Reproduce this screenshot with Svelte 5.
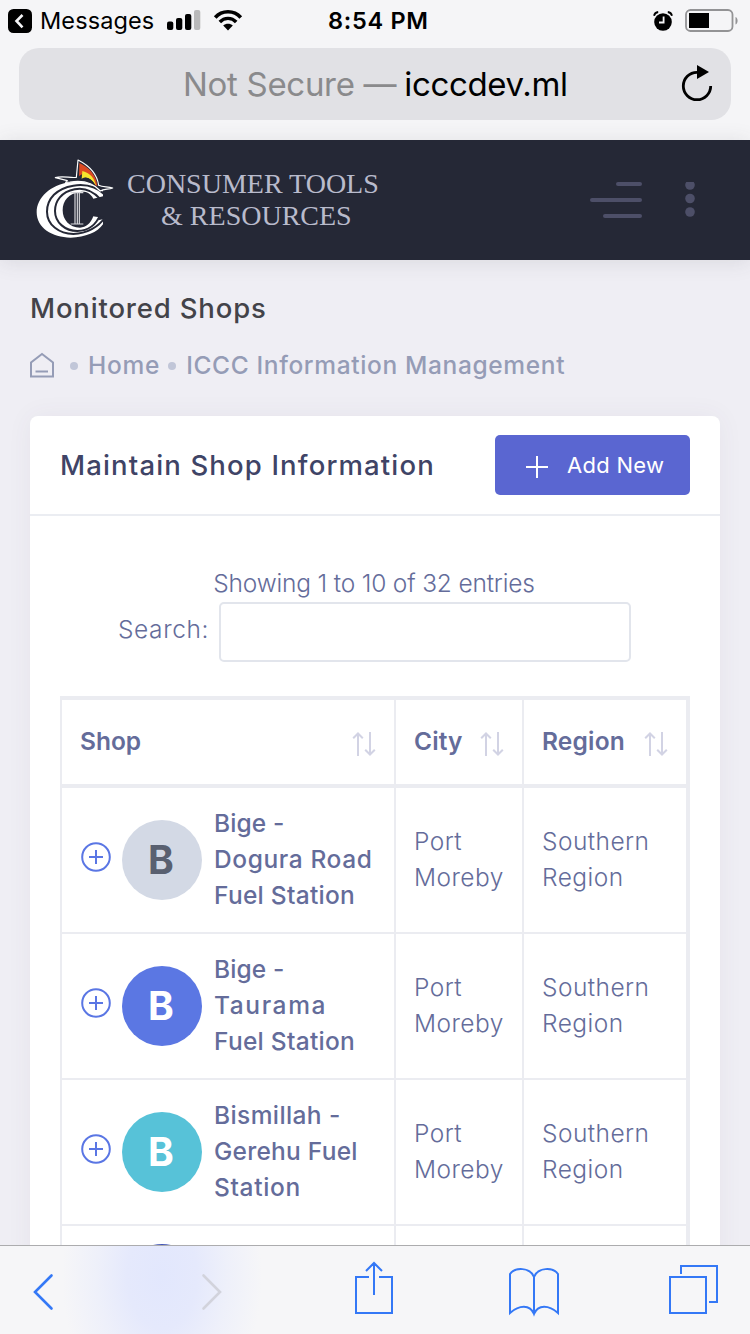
<script>
  const columns = ['Shop', 'City', 'Region'];
  const city = ['Port', 'Moreby'];
  const region = ['Southern', 'Region'];
  const shops = [
    { initial: 'B', lines: [['Bige -', 0.13], ['Dogura Road', 0.6], ['Fuel Station', 0.28]], tone: 'grey', city, region },
    { initial: 'B', lines: [['Bige -', 0.13], ['Taurama', 1.6], ['Fuel Station', 0.28]], tone: 'blue', city, region },
    { initial: 'B', lines: [['Bismillah -', 0.4], ['Gerehu Fuel', 0.25], ['Station', 0.65]], tone: 'teal', city, region },
    { initial: '', lines: [], tone: 'indigo', city: [], region: [] }
  ];
</script>

<div class="screen">
  <div class="chrome">
    <div class="status">
      <div class="side">
        <svg width="24" height="24" viewBox="0 0 24 24"><rect width="24" height="24" rx="5.5" /><path d="M14.5 6 8.5 12l6 6.3" fill="none" stroke="#f5f5f7" stroke-width="2.6" /></svg>
        <span class="messages">Messages</span>
        <svg class="signal" width="34" height="21" viewBox="0 0 34 21">
          <rect x="0" y="11.5" width="6.3" height="8.5" rx="2" /><rect x="9" y="8" width="6.3" height="12" rx="2" /><rect x="18" y="4" width="6.3" height="16" rx="2" /><rect x="27" y="0" width="6.3" height="20" rx="2" fill="#b9b9ba" />
        </svg>
        <svg class="wifi" width="28" height="21" viewBox="0 0 28 21" fill="none" stroke="#000">
          <path d="M1.2 7.5C8-.2 20-.2 26.8 7.5" stroke-width="3.6" /><path d="M5.800 12c4.500-4.900 11.900-4.900 16.400 0" stroke-width="3.400" /><path d="M14 20.500 9.200 15.600c2.500-2.400 7.100-2.400 9.600 0Z" fill="#000" stroke="none" />
        </svg>
      </div>
      <span class="time">8:54 PM</span>
      <div class="side end">
        <svg width="20" height="20" viewBox="0 0 20 20"><circle cx="10" cy="11" r="8.800" /><path d="M10.600 5.500v6H6" fill="none" stroke="#f5f5f7" stroke-width="1.800" /><path d="M1 4.800C1.500 2.500 3 1.200 5.200 1M19 4.800C18.500 2.500 17 1.200 14.800 1" fill="none" stroke="#000" stroke-width="1.800" /></svg>
        <svg width="54" height="24" viewBox="0 0 54 24"><rect x="1" y="1" width="46.500" height="21" rx="4.500" fill="none" stroke="#939395" stroke-width="1.800" /><rect x="4" y="4" width="20" height="15" /><path d="M50.500 8c2.800 1.200 2.800 6.400 0 7.500Z" fill="#939395" /></svg>
      </div>
    </div>
    <div class="url">
      <span class="insecure">Not Secure —</span><span class="domain">icccdev.ml</span>
      <svg class="reload" width="32" height="38" viewBox="0 0 32 38"><path d="M17.500 7.300H16a13.700 13.700 0 1 0 13.700 13.700" fill="none" stroke="#000" stroke-width="2.800" /><path d="M16 0v14l12-7Z" /></svg>
    </div>
  </div>

  <header>
    <div class="brand">
      <svg width="90" height="90" viewBox="0 0 270 270">
        <path fill="#fff" d="M219 98C196 80 158 76 118 82C62 90 20 128 20 172C20 218 66 248 122 248C166 247 203 232 219 208V188L190 184C182 206 168 217 150 218C118 218 98 194 98 166C98 137 117 114 150 111C168 109 180 114 190 131L219 124Z" />
        <path fill="#252836" d="M190 183L222 186V192L204 196L210 182Z" />
        <g fill="none" stroke="#252836" stroke-width="6">
          <path d="M226 120C198 93 163 87 130 92C80 100 51 131 51 170C51 210 88 237 130 237C170 236 206 216 226 186" />
          <path d="M212 133C184 103 158 98 134 103C94 111 75 138 75 168C75 203 106 228 142 228C174 227 198 210 210 180" />
        </g>
        <path d="M122 113h38M122 207h38M135 113v94M142 113v94M148 113v94" fill="none" stroke="#d9d9dd" stroke-width="3.500" />
        <path d="M76 68C98 61 121 70 139 67L144 15C170 28 200 48 206 91C220 98 234 93 248 99C234 104 222 101 211 108C190 84 157 75 120 81L107 82L112 77Z" fill="#252836" stroke="#fff" stroke-width="3.500" stroke-linejoin="round" />
        <path d="M148 24C176 36 198 58 202 93L196 91C186 62 164 48 147 64Z" fill="#dc4a22" />
        <path d="M157 48C182 54 194 72 198 91C184 72 171 62 155 72Z" fill="#f5e52d" />
        <path d="M155 72C168 62 182 70 193 86L176 79L153 76Z" fill="#252836" />
      </svg>
      <div class="wordmark"><span>CONSUMER TOOLS</span><span>&amp; RESOURCES</span></div>
    </div>
    <div class="tools">
      <svg width="52" height="36" viewBox="0 0 52 36" fill="#4d4f68"><rect x="26" width="26" height="4" rx="2" /><rect y="16" width="52" height="4" rx="2" /><rect x="13" y="32" width="39" height="4" rx="2" /></svg>
      <svg width="10" height="36" viewBox="0 0 10 36" fill="#4d4f68"><circle cx="5" cy="3" r="4.800" /><circle cx="5" cy="16.500" r="4.800" /><circle cx="5" cy="30" r="4.800" /></svg>
    </div>
  </header>

  <main>
    <h1>Monitored Shops</h1>
    <nav>
      <svg width="24" height="26" viewBox="0 0 24 26" fill="none" stroke="#959cb6" stroke-width="2"><path d="M1 24.500V10.500L12 2 23 10.500v14Z" /><path d="M5.500 19.500h12.500" /></svg>
      <i></i><span class="home">Home</span><i></i><span class="crumb">ICCC Information Management</span>
    </nav>

    <section>
      <div class="card-head">
        <h2>Maintain Shop Information</h2>
        <button><svg width="22" height="22" viewBox="0 0 22 22" stroke="#fff" stroke-width="2"><path d="M11 0v22M0 11h22" /></svg><span>Add New</span></button>
      </div>
      <p class="info">Showing 1 to 10 of 32 entries</p>
      <label><span>Search:</span><input type="text" /></label>

      <div class="table">
        <div class="row head">
          {#each columns as column}
            <div class="cell {column.toLowerCase()}">
              <span>{column}</span>
              <svg width="24" height="24" viewBox="0 0 24 24" fill="none" stroke="#d2d3e4" stroke-width="2"><path d="M6 24V1.500M1.200 6.300 6 1.500l4.800 4.800M18 0v22.500M13.200 17.700 18 22.500l4.800-4.800" /></svg>
            </div>
          {/each}
        </div>
        {#each shops as shop}
          <div class="row">
            <div class="cell name">
              <svg width="30" height="30" viewBox="0 0 30 30" fill="none" stroke="#5a76e4" stroke-width="2"><circle cx="15" cy="15" r="13.800" /><path d="M15 8v14M8 15h14" /></svg>
              <div class="avatar {shop.tone}">{shop.initial}</div>
              <div class="lines">
                {#each shop.lines as [text, spacing]}<span style="letter-spacing: {spacing}px">{text}</span>{/each}
              </div>
            </div>
            <div class="cell"><div class="lines light">{#each shop.city as word}<span>{word}</span>{/each}</div></div>
            <div class="cell"><div class="lines light">{#each shop.region as word}<span>{word}</span>{/each}</div></div>
          </div>
        {/each}
      </div>
    </section>
  </main>

  <footer>
    <svg class="prev" width="20" height="36" viewBox="0 0 20 36"><path d="M18.500 1.500 2 18l16.500 16.500" /></svg>
    <svg class="next" width="20" height="36" viewBox="0 0 20 36"><path d="M1.500 1.500 18 18 1.500 34.500" /></svg>
    <svg class="share" width="38" height="53" viewBox="0 0 38 53"><path d="M14 16H1v36h36V16H24M19 34V2M11 10l8-8 8 8" /></svg>
    <svg class="book" width="50" height="48" viewBox="0 0 50 48"><path d="M25 46V9C21-1 6-1 1 6V45C10 37 21 36 25 46C29 36 40 37 49 45V6C44-1 29-1 25 9" /></svg>
    <svg class="tabs" width="50" height="50" viewBox="0 0 50 50"><path d="M1 12h36v36H1ZM12 9V1h36v36h-8" /></svg>
  </footer>
</div>

<style>
  .screen { width: 750px; height: 1334px; display: flex; flex-direction: column; overflow: hidden; background: #efeef4; font-family: Inter, sans-serif; }
  .screen * { box-sizing: border-box; }
  svg { display: block; flex: none; overflow: visible; }
  h1, h2, p { margin: 0; }
  span { white-space: nowrap; }

  .chrome { flex: none; height: 140px; background: #f5f5f7; }
  .status { height: 40px; display: grid; grid-template-columns: 328px 1fr 328px; align-items: center; padding: 1px 0 0; font-size: 23.5px; line-height: 38px; color: #000; }
  .side { display: flex; align-items: center; padding-left: 8px; }
  .end { justify-content: flex-end; padding: 0 10px 0 0; gap: 12px; margin-left: -8px; margin-right: 8px; }
  .messages { margin-left: 8px; letter-spacing: .1px; }
  .signal { margin-left: 13px; }
  .wifi { margin-left: 13px; }
  .time { font-weight: 600; letter-spacing: .7px; }
  .url { height: 72px; margin: 8px 19px 0; padding: 0 18px 0 164px; display: flex; align-items: center; border-radius: 20px; background: #e1e1e5; font-size: 33px; line-height: 72px; }
  .insecure { color: #8a8a8c; letter-spacing: -.3px; }
  .domain { margin-left: 8px; color: #000; letter-spacing: -.35px; }
  .reload { margin-left: auto; }

  header { flex: none; height: 120px; padding: 0 55px 0 30px; display: flex; justify-content: space-between; background: #252836; box-shadow: 0 2px 20px rgba(69, 65, 78, .12); z-index: 1; }
  .brand { display: flex; padding-top: 15px; }
  .wordmark { display: flex; flex-direction: column; align-items: center; margin: 13px 0 0 7px; color: #b9bbcc; font: 28px/32px "Liberation Serif", serif; }
  .wordmark span + span { margin-left: 7px; }
  .tools { display: flex; gap: 43px; padding-top: 42px; }
  .tools svg + svg { overflow: hidden; }

  main { flex: none; height: 985px; overflow: hidden; padding: 28px 30px 0; }
  h1 { color: #434349; font-size: 27.5px; font-weight: 500; line-height: 40px; letter-spacing: .83px; }
  nav { height: 30px; margin-top: 22px; display: flex; align-items: center; color: #959cb6; font-size: 24.5px; font-weight: 500; line-height: 30px; }
  nav i { width: 8px; height: 8px; margin: 1px 9px 0 8px; border-radius: 50%; background: #c1c6d8; }
  nav svg + i { margin: 1px 10px 0 16px; }
  nav .crumb { margin-left: 1px; letter-spacing: .64px; }
  .home { letter-spacing: .73px; }

  section { margin-top: 36px; height: 1000px; border-radius: 8px; background: #fff; box-shadow: 0 0 26px rgba(82, 63, 105, .06); }
  .card-head { height: 100px; padding: 0 30px; display: flex; align-items: center; justify-content: space-between; border-bottom: 2px solid #ebedf2; }
  h2 { color: #3f4466; font-size: 27.5px; font-weight: 500; line-height: 40px; letter-spacing: 1.15px; }
  button { width: 195px; height: 60px; padding: 0 0 0 31px; display: flex; align-items: center; gap: 19px; border: 0; border-radius: 5px; background: #5a66d1; color: #fff; font: 22px/30px Inter, sans-serif; letter-spacing: .28px; }
  button svg { margin-top: 4px; }
  .info { margin-top: 49px; padding-right: 2px; text-align: center; color: #646c9a; font-size: 24.5px; font-weight: 300; line-height: 36px; letter-spacing: -.18px; }
  label { height: 60px; margin-top: 1px; display: flex; align-items: center; justify-content: center; gap: 10px; color: #646c9a; font-size: 24.5px; font-weight: 300; letter-spacing: .6px; padding-right: 1px; }
  label span { padding-bottom: 6px; }
  input { width: 412px; height: 60px; border: 2px solid #e2e5ec; border-radius: 5px; background: #fff; }

  .table { margin: 34px 30px 0; border: solid #ebecf1; border-width: 4px 4px 0 2px; color: #646c9a; }
  .row { display: grid; grid-template-columns: 334px 128px 162px; border-bottom: 2px solid #ebecf1; }
  .head { height: 88px; border-bottom-width: 4px; }
  .cell { padding: 18px; display: flex; align-items: center; border-right: 2px solid #ebecf1; }
  .cell:last-child { border-right: 0; }
  .head .cell { justify-content: space-between; font-size: 24.5px; font-weight: 600; line-height: 36px; }
  .head span { padding-bottom: 2px; }
  .head svg { margin-top: 4px; }
  .city { letter-spacing: .1px; }
  .region { letter-spacing: .2px; }
  .name svg { margin: -7px 11px 0 1px; }
  .avatar { width: 80px; height: 80px; flex: none; display: flex; align-items: center; justify-content: center; border-radius: 50%; font-size: 39px; font-weight: 700; color: #fff; padding: 0 2px 2px 0; }
  .grey { background: #d3d9e5; color: #596070; }
  .blue { background: #5b77e3; }
  .teal { background: #57c2d8; }
  .indigo { background: #4558b8; }
  .lines { display: flex; flex-direction: column; margin-top: -2px; font-size: 24.5px; font-weight: 500; line-height: 36px; }
  .name .lines { height: 108px; margin: -1px 0 1px 12px; }
  .name .lines:empty { height: 80px; }
  .light { font-weight: 300; letter-spacing: .45px; }

  footer { flex: none; height: 89px; padding-left: 33px; display: flex; border-top: 1px solid #acacae; background: radial-gradient(ellipse 100px 150px at 162px 30px, #e2e7fd 0, #e5e9fc 35%, #eef0fa 65%, rgba(247, 247, 248, 0) 100%), #f6f6f8; z-index: 1; }
  footer path { fill: none; stroke: #3478f6; stroke-width: 2; }
  .prev, .next { margin-top: 28px; }
  .prev path, .next path { stroke-width: 2.6; stroke-linecap: round; }
  .next { margin-left: 149px; }
  .next path { stroke: #d2d3dc; }
  .share { margin: 15px 0 0 133px; }
  .book { margin: 22px 0 0 116px; }
  .tabs { margin: 19px 0 0 110px; }
</style>
